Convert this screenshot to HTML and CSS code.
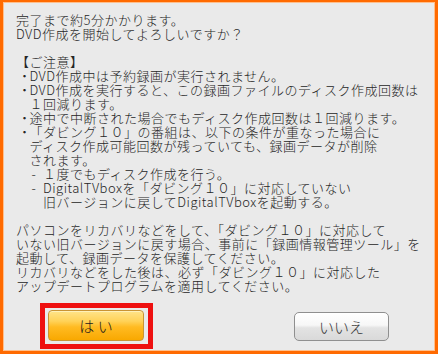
FILE: index.html
```html
<!DOCTYPE html>
<html lang="ja">
<head>
<meta charset="utf-8">
<title>DVD作成の確認</title>
<link rel="stylesheet" href="styles.css">
</head>
<body>
<div class="dialog">
  <div class="message">
    <p class="para">完了まで約5分かかります。<br>DVD作成を開始してよろしいですか？</p>
    <div class="notes">
      <div class="notes-title">【ご注意】</div>
      <ul class="note-list">
        <li>DVD作成中は予約録画が実行されません。</li>
        <li>DVD作成を実行すると、この録画ファイルのディスク作成回数は<br>１回減ります。</li>
        <li>途中で中断された場合でもディスク作成回数は１回減ります。</li>
        <li>「ダビング１０」の番組は、以下の条件が重なった場合に<br>ディスク作成可能回数が残っていても、録画データが削除<br>されます。
          <ul class="sub-list">
            <li>１度でもディスク作成を行う。</li>
            <li>DigitalTVboxを「ダビング１０」に対応していない<br>旧バージョンに戻してDigitalTVboxを起動する。</li>
          </ul>
        </li>
      </ul>
    </div>
    <p class="para">パソコンをリカバリなどをして、「ダビング１０」に対応して<br>いない旧バージョンに戻す場合、事前に「録画情報管理ツール」を<br>起動して、録画データを保護してください。<br>リカバリなどをした後は、必ず「ダビング１０」に対応した<br>アップデートプログラムを適用してください。</p>
  </div>
  <div class="actions">
    <div class="highlight"><button class="btn btn-yes" type="button">は い</button></div>
    <button class="btn btn-no" type="button">いいえ</button>
  </div>
</div>
</body>
</html>
```
FILE: styles.css
```css
html, body {
  margin: 0;
  padding: 0;
}

body {
  width: 438px;
  height: 354px;
  overflow: hidden;
  font-family: "Noto Sans CJK JP", "Noto Sans", sans-serif;
}

.dialog {
  box-sizing: border-box;
  width: 438px;
  height: 354px;
  border: 3px solid #ff6a00;
  border-top-width: 2px;
  background: #eaeaea;
  box-shadow: inset 0 0 0 1px #ffbf8c;
  display: flex;
  flex-direction: column;
  padding: 11px 0 0 13px;
}

.message {
  font-size: 13px;
  font-weight: 300;
  line-height: 14px;
  letter-spacing: 0.5px;
  color: #262626;
  white-space: nowrap;
}

.para {
  margin: 0;
}

.notes {
  margin: 14px 0;
}

.note-list,
.sub-list {
  list-style: none;
  margin: 0;
  padding: 0;
}

.note-list > li,
.sub-list > li {
  padding-left: 13.5px;
  text-indent: -13.5px;
}

.note-list > li::before {
  content: "・";
  display: inline-block;
  width: 13.5px;
  text-indent: 0;
  padding-left: 2px;
  box-sizing: border-box;
}

.sub-list > li::before {
  content: "-";
  display: inline-block;
  width: 13.5px;
  text-indent: 0;
  padding-left: 2px;
  box-sizing: border-box;
}

.actions {
  margin-top: 10px;
  display: flex;
  justify-content: space-between;
  align-items: center;
  padding: 0 46px 0 24px;
}

.highlight {
  border: 5px solid #ee1010;
  padding: 2px 4px 3px 3px;
  display: flex;
}

.btn {
  font-family: "Noto Sans CJK JP", "Noto Sans", sans-serif;
  font-size: 15px;
  font-weight: 300;
  line-height: 1;
  color: #1a1a1a;
  padding: 0;
  margin: 0;
  cursor: pointer;
}

.btn-yes {
  width: 96px;
  height: 31px;
  border: 1px solid #c99434;
  border-radius: 4px;
  background: linear-gradient(to bottom, #ffe48a 0%, #ffd258 35%, #ffbb22 55%, #f9a800 100%);
  box-shadow: inset 0 1px 0 #fff1b8;
}

.btn-no {
  width: 95px;
  height: 29px;
  border: 1px solid #8f8f8f;
  border-radius: 5px;
  color: #333;
  background: linear-gradient(to bottom, #ffffff 0%, #f7f7f7 45%, #e3e3e3 55%, #d9d9d9 100%);
  box-shadow: inset 0 1px 0 #ffffff;
}
```
